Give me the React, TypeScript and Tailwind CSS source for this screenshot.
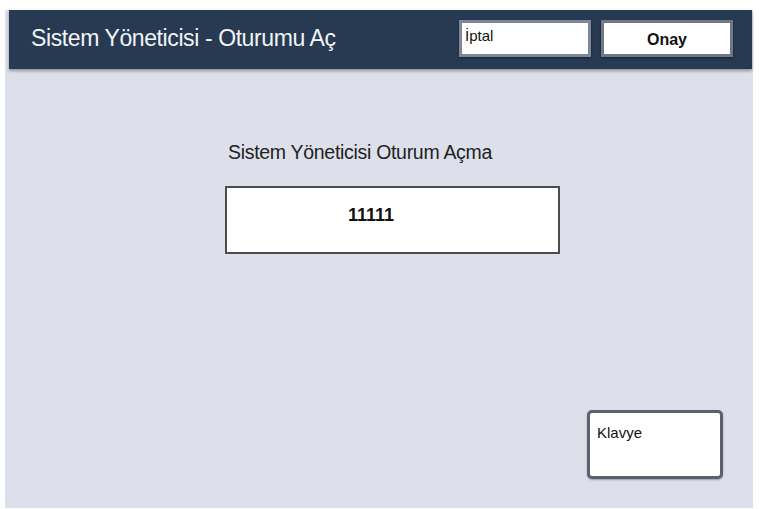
import React from "react";

export default function App() {
  const font = { fontFamily: '"Liberation Sans", Arial, sans-serif' };
  return (
    <div className="w-[759px] h-[509px] bg-white pt-[10px] pl-[5px] overflow-hidden" style={font}>
      <div className="w-[748px] h-[498px] bg-[#dde0ea] flex flex-col">
        <div className="ml-[4px] w-[743px] h-[59px] bg-[#273a52] flex items-start pt-[10px] shadow-[0_2px_3px_rgba(0,0,0,0.35)]">
          <div className="flex-1 pl-[22px] pt-[4px] text-[23px] leading-[28px] tracking-[-0.4px] text-[#f2f4f7]">
            Sistem Yöneticisi - Oturumu Aç
          </div>
          <div className="w-[132px] h-[37px] border-[3px] border-[#7d879a] bg-white pl-[3px] pt-[4px] text-[15px] leading-[18px] text-[#111] shadow-[0_1px_2px_rgba(0,0,0,0.4)]">
            İptal
          </div>
          <div className="ml-[10px] mr-[19px] w-[132px] h-[37px] border-[3px] border-[#6f788b] bg-white flex items-center justify-center pt-[2px] text-[16px] font-bold text-[#111] shadow-[0_1px_2px_rgba(0,0,0,0.4)]">
            Onay
          </div>
        </div>
        <div className="flex flex-col items-start pl-[220px] pt-[72px] flex-1">
          <div className="ml-[3px] text-[19.5px] leading-[23px] tracking-[-0.3px] text-[#222]">
            Sistem Yöneticisi Oturum Açma
          </div>
          <div className="mt-[22px] w-[335px] h-[68px] border-2 border-[#4d4d4d] bg-white pl-[121px] pt-[16px] text-[18px] leading-[22px] font-bold text-[#111]">
            11111
          </div>
        </div>
        <div className="self-end mr-[30px] mb-[29px] w-[136px] h-[69px] rounded-[5px] border-[3px] border-[#5c6170] bg-white pl-[7px] pt-[11px] text-[15px] leading-[18px] text-[#111] shadow-[0_1px_2px_rgba(0,0,0,0.3)]">
          Klavye
        </div>
      </div>
    </div>
  );
}
